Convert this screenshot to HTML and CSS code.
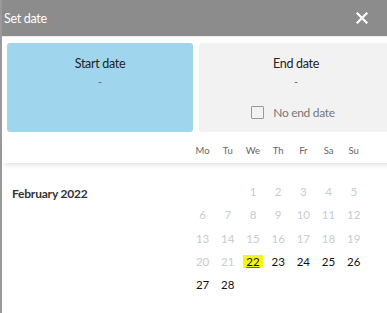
FILE: index.html
```html
<!DOCTYPE html>
<html>
<head>
<meta charset="utf-8">
<link rel="stylesheet" href="styles.css">
</head>
<body>
<div class="dialog">
  <header class="bar">
    <span class="title">Set date</span>
    <svg class="close" width="12" height="12" viewBox="0 0 12 12"><path d="M1.5 1.5 L10.5 10.5 M10.5 1.5 L1.5 10.5" stroke="#fff" stroke-width="2.2" stroke-linecap="square"/></svg>
  </header>
  <section class="cards">
    <div class="card start">
      <div class="card-title">Start date</div>
      <div class="card-value">-</div>
    </div>
    <div class="card end">
      <div class="card-title">End date</div>
      <div class="card-value">-</div>
      <label class="noend"><span class="box"></span>No end date</label>
    </div>
  </section>
  <div class="weekdays">
    <span>Mo</span><span>Tu</span><span>We</span><span>Th</span><span>Fr</span><span>Sa</span><span>Su</span>
  </div>
  <section class="month">
    <div class="month-name">February 2022</div>
    <div class="days">
      <span></span><span></span>
      <span class="off">1</span><span class="off">2</span><span class="off">3</span><span class="off">4</span><span class="off">5</span>
      <span class="off">6</span><span class="off">7</span><span class="off">8</span><span class="off">9</span><span class="off">10</span><span class="off">11</span><span class="off">12</span>
      <span class="off">13</span><span class="off">14</span><span class="off">15</span><span class="off">16</span><span class="off">17</span><span class="off">18</span><span class="off">19</span>
      <span class="off">20</span><span class="off">21</span><span class="today"><b>22</b></span><span>23</span><span>24</span><span>25</span><span>26</span>
      <span>27</span><span>28</span>
    </div>
  </section>
</div>
</body>
</html>
```

FILE: styles.css
```css
html, body {
  margin: 0;
  padding: 0;
  background: #fff;
  overflow: hidden;
}
body {
  font-family: Lato, "Noto Sans", sans-serif;
  width: 387px;
  height: 313px;
}
.dialog {
  border-left: 2px solid #9a9a9a;
  height: 313px;
  box-sizing: border-box;
  width: 395px;
}
.bar {
  height: 36px;
  background: #8c8c8c;
  display: flex;
  align-items: center;
  justify-content: space-between;
  padding: 0 0 0 2px;
  border-bottom: 1px solid #ececec;
}
.title {
  color: #fff;
  font-size: 12.5px;
  letter-spacing: -0.3px;
}
.close {
  margin-right: 27px;
}
.cards {
  display: flex;
  gap: 6px;
  padding: 6px 0 0 5px;
}
.card {
  width: 186px;
  height: 89px;
  border-radius: 3px;
  display: flex;
  flex-direction: column;
  align-items: center;
  padding-top: 12px;
  box-sizing: border-box;
}
.start { background: #9fd6ed; }
.end { background: #f2f2f2; width: 194px; }
.card-title {
  font-size: 12.5px;
  letter-spacing: -0.3px;
  color: #222;
  line-height: 17px;
}
.card-value {
  font-size: 11px;
  color: #666;
  line-height: 14px;
  margin-top: 3px;
}
.noend {
  display: flex;
  align-items: center;
  gap: 9px;
  font-size: 12px;
  letter-spacing: -0.3px;
  color: #777;
  margin-top: 16px;
  margin-left: -6px;
}
.box {
  width: 11px;
  height: 11px;
  border: 1.5px solid #999;
  border-radius: 1px;
}
.weekdays {
  display: grid;
  grid-template-columns: repeat(7, 25.2px);
  padding-left: 188px;
  margin-top: 5px;
  height: 26px;
  align-items: center;
  font-size: 9.5px;
  color: #666;
  box-shadow: 0 4px 5px -2px rgba(0,0,0,0.12);
  position: relative;
}
.weekdays span { text-align: center; }
.month {
  display: flex;
  padding-top: 17px;
}
.month-name {
  width: 188px;
  box-sizing: border-box;
  padding-left: 10px;
  font-size: 12px;
  letter-spacing: -0.2px;
  font-weight: bold;
  color: #333;
  line-height: 28px;
}
.days {
  display: grid;
  grid-template-columns: repeat(7, 25.2px);
  grid-auto-rows: 23.3px;
  align-items: center;
  font-size: 11.5px;
  color: #111;
}
.days span { text-align: center; }
.days .off { color: #c5ccd4; }
.today b {
  font-weight: normal;
  background: #f5f51a;
  padding: 0 3px;
  text-decoration: underline;
  text-decoration-color: #6b6b2a;
}
```
